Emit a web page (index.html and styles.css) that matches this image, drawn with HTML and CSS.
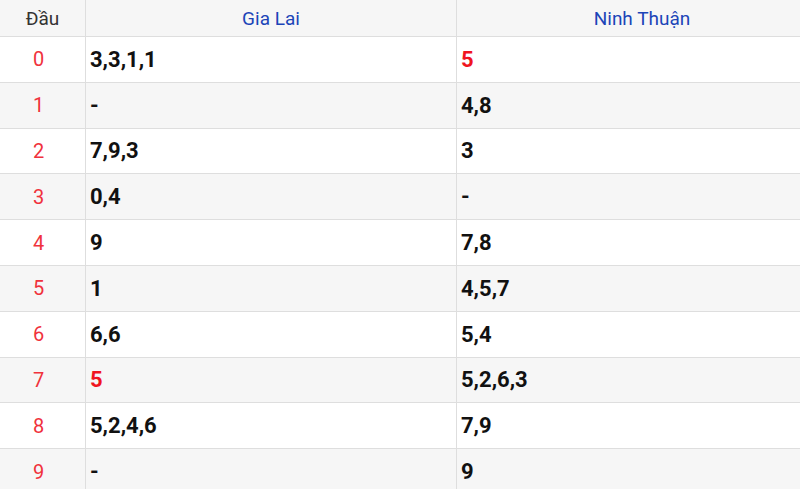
FILE: index.html
```html
<!DOCTYPE html>
<html lang="vi">
<head>
<meta charset="utf-8">
<title>Lô tô</title>
<link rel="stylesheet" href="styles.css">
</head>
<body>
<table class="loto">
  <colgroup>
    <col class="c-head">
    <col class="c-prov">
    <col class="c-prov">
  </colgroup>
  <thead>
    <tr>
      <th class="h-dau">Đầu</th>
      <th>Gia Lai</th>
      <th>Ninh Thuận</th>
    </tr>
  </thead>
  <tbody>
    <tr><td class="dau">0</td><td>3,3,1,1</td><td class="hot">5</td></tr>
    <tr><td class="dau">1</td><td>-</td><td>4,8</td></tr>
    <tr><td class="dau">2</td><td>7,9,3</td><td>3</td></tr>
    <tr><td class="dau">3</td><td>0,4</td><td>-</td></tr>
    <tr><td class="dau">4</td><td>9</td><td>7,8</td></tr>
    <tr><td class="dau">5</td><td>1</td><td>4,5,7</td></tr>
    <tr><td class="dau">6</td><td>6,6</td><td>5,4</td></tr>
    <tr><td class="dau">7</td><td class="hot">5</td><td>5,2,6,3</td></tr>
    <tr><td class="dau">8</td><td>5,2,4,6</td><td>7,9</td></tr>
    <tr><td class="dau">9</td><td>-</td><td>9</td></tr>
  </tbody>
</table>
</body>
</html>
```

FILE: styles.css
```css
html, body {
  margin: 0;
  padding: 0;
  background: #ffffff;
  overflow: hidden;
}
body {
  font-family: Roboto, "Liberation Sans", Arial, sans-serif;
}
.loto {
  width: 828px;
  border-collapse: collapse;
  table-layout: fixed;
  margin-left: -1px;
  margin-top: -1px;
}
.c-head { width: 86px; }
.c-prov { width: 371px; }
.loto th,
.loto td {
  border: 1px solid #dedede;
  padding: 0 4px;
}
.loto th {
  height: 36px;
  font-size: 19px;
  font-weight: 400;
  color: #1c45b8;
  background: #f6f6f6;
  text-align: center;
}
.loto th.h-dau {
  color: #333333;
}
.loto td {
  height: 44.8px;
  font-size: 22px;
  font-weight: 700;
  color: #111111;
  text-align: left;
}
.loto tbody tr:nth-child(even) td {
  background: #f6f6f6;
}
.loto td.dau {
  text-align: center;
  padding: 0 8px 0 0;
  font-size: 20px;
  font-weight: 400;
  color: #f0323c;
}
.loto td.hot {
  color: #f0151f;
}
```
